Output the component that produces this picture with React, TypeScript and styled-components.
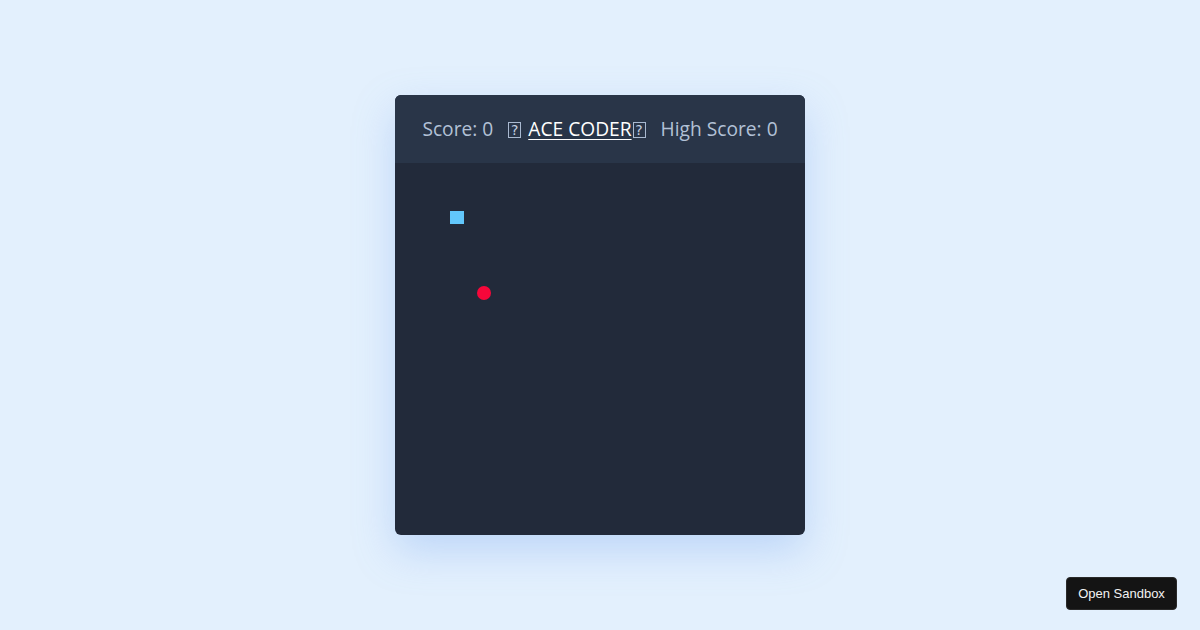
import React from "react";
import styled, { createGlobalStyle } from "styled-components";

const Global = createGlobalStyle`
  html, body { margin: 0; padding: 0; }
  body {
    background: #e3f0fd;
    font-family: "Open Sans", "Noto Sans", sans-serif;
  }
`;

const Page = styled.div`
  width: 1200px;
  height: 630px;
  display: flex;
  align-items: center;
  justify-content: center;
  position: relative;
`;

const Card = styled.div`
  width: 410px;
  height: 440px;
  border-radius: 6px;
  overflow: hidden;
  background: #222a3a;
  box-shadow: 0 16px 40px rgba(120, 165, 240, 0.35);
  display: flex;
  flex-direction: column;
`;

const Header = styled.div`
  height: 68px;
  flex: none;
  background: #293548;
  display: flex;
  align-items: center;
  justify-content: center;
  gap: 15px;
  font-size: 19.2px;
  color: #b2c1d6;
  padding-bottom: 1px;
  box-sizing: border-box;
`;

const Stat = styled.span``;

const TitleGroup = styled.span`
  display: inline-flex;
  align-items: center;
`;

const Title = styled.span`
  color: #ffffff;
  text-decoration: underline;
  text-underline-offset: 3px;
  text-decoration-thickness: 1px;
  margin: 0 1px 0 7px;
`;

const Tofu = styled.span`
  display: inline-flex;
  align-items: center;
  justify-content: center;
  box-sizing: border-box;
  width: 13px;
  height: 16px;
  border: 1px solid #a9b9d0;
  font-family: "DejaVu Sans", sans-serif;
  font-size: 14px;
  line-height: 1;
  color: #c2cfe0;
  margin-top: 2px;
`;

const Board = styled.div`
  flex: 1;
  position: relative;
`;

const Segment = styled.div<{ $x: number; $y: number }>`
  position: absolute;
  left: ${(p) => p.$x}px;
  top: ${(p) => p.$y}px;
  width: 14px;
  height: 13px;
  background: #62c7fb;
`;

const Food = styled.div<{ $x: number; $y: number }>`
  position: absolute;
  left: ${(p) => p.$x}px;
  top: ${(p) => p.$y}px;
  width: 14px;
  height: 14px;
  border-radius: 50%;
  background: #f7073a;
`;

const SandboxButton = styled.button`
  position: absolute;
  right: 23px;
  bottom: 20px;
  width: 111px;
  height: 33px;
  background: #141414;
  color: #f2f2f2;
  border: 1px solid #2a2a2a;
  border-radius: 4px;
  font-family: "Liberation Sans", Arial, sans-serif;
  font-size: 13px;
  padding: 0;
  cursor: pointer;
`;

export default function App() {
  return (
    <>
      <Global />
      <Page>
        <Card>
          <Header>
            <Stat>Score: 0</Stat>
            <TitleGroup>
              <Tofu>?</Tofu>
              <Title>ACE CODER</Title>
              <Tofu>?</Tofu>
            </TitleGroup>
            <Stat>High Score: 0</Stat>
          </Header>
          <Board>
            <Segment $x={55} $y={48} />
            <Food $x={82} $y={123} />
          </Board>
        </Card>
        <SandboxButton>Open Sandbox</SandboxButton>
      </Page>
    </>
  );
}
